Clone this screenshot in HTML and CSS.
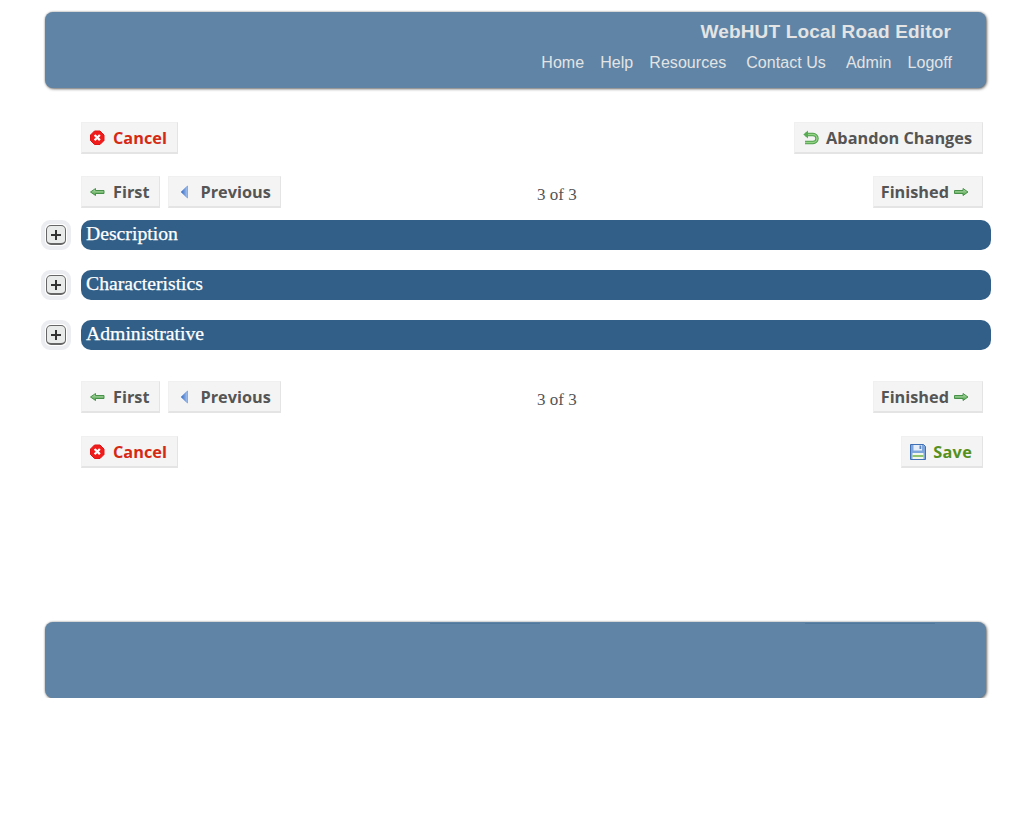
FILE: index.html
```html
<!DOCTYPE html>
<html lang="en">
<head>
<meta charset="utf-8">
<title>WebHUT Local Road Editor</title>
<link rel="stylesheet" href="styles.css">
</head>
<body>
<div class="page">
  <header class="banner">
    <div class="title">WebHUT Local Road Editor</div>
    <nav class="nav">
      <a>Home</a><a>Help</a><a>Resources</a><a class="wide">Contact Us</a><a class="wide">Admin</a><a>Logoff</a>
    </nav>
  </header>

  <main class="form">
    <div class="row row-top">
      <a class="btn cancel"><svg class="ico" viewBox="0 0 16 16"><use href="#i-cancel"/></svg>Cancel</a>
      <a class="btn"><svg class="ico" viewBox="0 0 16 16"><use href="#i-undo"/></svg>Abandon Changes</a>
    </div>

    <div class="row row-pager">
      <div class="group">
        <a class="btn"><svg class="ico" viewBox="0 0 16 16"><use href="#i-left"/></svg>First</a>
        <a class="btn prev"><svg class="ico" viewBox="0 0 16 16"><use href="#i-prev"/></svg>Previous</a>
      </div>
      <div class="count">3 of 3</div>
      <a class="btn end">Finished<svg class="ico after" viewBox="0 0 16 16"><use href="#i-right"/></svg></a>
    </div>

    <div class="sections">
      <section class="section">
        <span class="toggle"><span class="toggle-box"><svg viewBox="0 0 10 10"><path d="M5 0v10M0 5h10"/></svg></span></span>
        <h2 class="bar">Description</h2>
      </section>
      <section class="section">
        <span class="toggle"><span class="toggle-box"><svg viewBox="0 0 10 10"><path d="M5 0v10M0 5h10"/></svg></span></span>
        <h2 class="bar">Characteristics</h2>
      </section>
      <section class="section">
        <span class="toggle"><span class="toggle-box"><svg viewBox="0 0 10 10"><path d="M5 0v10M0 5h10"/></svg></span></span>
        <h2 class="bar">Administrative</h2>
      </section>
    </div>

    <div class="row row-pager row-pager-low">
      <div class="group">
        <a class="btn"><svg class="ico" viewBox="0 0 16 16"><use href="#i-left"/></svg>First</a>
        <a class="btn prev"><svg class="ico" viewBox="0 0 16 16"><use href="#i-prev"/></svg>Previous</a>
      </div>
      <div class="count">3 of 3</div>
      <a class="btn end">Finished<svg class="ico after" viewBox="0 0 16 16"><use href="#i-right"/></svg></a>
    </div>

    <div class="row row-bottom">
      <a class="btn cancel"><svg class="ico" viewBox="0 0 16 16"><use href="#i-cancel"/></svg>Cancel</a>
      <a class="btn save"><svg class="ico" viewBox="0 0 16 16"><use href="#i-save"/></svg>Save</a>
    </div>
  </main>

  <footer class="banner footer"><span class="mark mark-a"></span><span class="mark mark-b"></span></footer>
</div>

<svg class="defs" width="0" height="0" aria-hidden="true">
  <defs>
    <linearGradient id="g-arrow" x1="0" y1="0" x2="0" y2="1">
      <stop offset="0" stop-color="#b8e0ae"/><stop offset="1" stop-color="#4f9f4d"/>
    </linearGradient>
    <linearGradient id="g-blue" x1="0" y1="0" x2="1" y2="0">
      <stop offset="0" stop-color="#2f66c4"/><stop offset="1" stop-color="#a9c6ee"/>
    </linearGradient>
    <symbol id="i-cancel" viewBox="0 0 16 16">
      <path d="M4.500 1h5.500l4 4v5.500l-4 4H4.500l-4-4V5z" fill="#f01c1c" stroke="#e01616"/>
      <path d="M5.400 5.700l3.700 3.700M9.100 5.700L5.400 9.400" stroke="#fff" stroke-width="2.200" stroke-linecap="square"/>
    </symbol>
    <symbol id="i-undo" viewBox="0 0 16 16">
      <path d="M2 4.500h8a4 4 0 0 1 0 8H2" fill="none" stroke="#4f9f4d" stroke-width="3.400"/>
      <path d="M2 4.500h8a4 4 0 0 1 0 8H2" fill="none" stroke="#93d486" stroke-width="1.500"/>
      <path d="M0.300 4.500L5 0.500v8z" fill="#5aab55"/>
    </symbol>
    <symbol id="i-left" viewBox="0 0 16 16">
      <path d="M0.500 8l5-3.500v2h8.500v3H5.500v2z" fill="url(#g-arrow)" stroke="#3a8a3c" stroke-width="0.900"/>
    </symbol>
    <symbol id="i-right" viewBox="0 0 16 16">
      <path d="M15 8l-5-3.500v2H1.500v3H10v2z" fill="url(#g-arrow)" stroke="#3a8a3c" stroke-width="0.900"/>
    </symbol>
    <symbol id="i-prev" viewBox="0 0 16 16">
      <path d="M10.500 2v12L4 8z" fill="url(#g-blue)" stroke="#5b8ad6" stroke-width="0.600"/>
    </symbol>
    <symbol id="i-save" viewBox="0 0 16 16">
      <path d="M0.500 0.500h13l2 2v13H0.500z" fill="#7ea6dc" stroke="#3f6fb5"/>
      <rect x="3.500" y="1" width="8.500" height="5.500" fill="#e6eefa"/>
      <rect x="9.500" y="1.500" width="1.800" height="3.500" fill="#5a86c6"/>
      <rect x="2.500" y="9" width="11" height="6" fill="#f2f6ea"/>
      <rect x="2.500" y="11" width="11" height="2" fill="#8fc46e"/>
    </symbol>
  </defs>
</svg>
</body>
</html>
```
FILE: styles.css
```css
html, body {
  margin: 0;
  padding: 0;
  background: #fff;
}

.page {
  width: 941px;
  margin-left: 45px;
  padding-top: 12px;
}

.banner {
  box-sizing: border-box;
  height: 76px;
  background: #5f84a6;
  border-radius: 8px;
  box-shadow: 1px 1px 3px rgba(40, 40, 40, 0.65), 0 0 2px rgba(60, 60, 60, 0.4);
  font-family: "Liberation Sans", Arial, sans-serif;
  color: #e4e4e4;
  padding: 9px 35px 0 0;
  position: relative;
}

.title {
  text-align: right;
  font-size: 19px;
  font-weight: 700;
  letter-spacing: 0.160px;
  line-height: 21px;
}

.nav {
  display: flex;
  justify-content: flex-end;
  gap: 16px;
  margin-top: 11px;
  margin-right: -1px;
  font-size: 16px;
  letter-spacing: 0.050px;
  line-height: 20px;
}

.nav .wide {
  margin-left: 4px;
}

.form {
  margin-left: 36px;
  width: 902px;
  font-family: "Open Sans", "DejaVu Sans", sans-serif;
}

.row {
  display: flex;
  justify-content: space-between;
  align-items: flex-start;
}

.row-top {
  margin-top: 34px;
}

.row-pager {
  margin-top: 22px;
}

.row-pager-low {
  margin-top: 31px;
}

.row-bottom {
  margin-top: 23px;
}

.group {
  display: flex;
  gap: 8px;
  flex: 0 0 456px;
}

.count {
  flex: 1;
  font-family: "Liberation Serif", "Times New Roman", serif;
  font-size: 17px;
  line-height: 20px;
  color: #555;
  padding-top: 9px;
}

.btn {
  box-sizing: border-box;
  display: inline-flex;
  align-items: center;
  height: 32px;
  padding: 0 10px 0 8px;
  background: #f4f4f4;
  border: 1px solid #f0f0f0;
  border-right-color: #e4e4e4;
  border-bottom: 2px solid #e4e4e4;
  font-size: 16.300px;
  font-weight: 700;
  color: #555;
  white-space: nowrap;
}

.btn.end {
  padding: 0 13px 0 7px;
}

.btn.prev {
  padding-right: 9px;
}

.cancel {
  color: #d42a14;
}

.save {
  color: #56901c;
  letter-spacing: 0.250px;
}

.ico {
  width: 16px;
  height: 16px;
  margin-right: 7px;
  flex: none;
}

.ico.after {
  margin: 0 0 0 4px;
}

.sections {
  margin-top: 12px;
  margin-left: -40px;
  width: 950px;
  display: flex;
  flex-direction: column;
  gap: 20px;
}

.section {
  display: flex;
  align-items: center;
  gap: 10px;
  height: 30px;
}

.toggle {
  box-sizing: border-box;
  width: 30px;
  height: 30px;
  border: 4px solid #ecedf1;
  border-radius: 9px;
  background: #fff;
  display: flex;
  align-items: center;
  justify-content: center;
  flex: none;
}

.toggle-box {
  box-sizing: border-box;
  width: 20px;
  height: 20px;
  border: 1px solid #666;
  border-bottom-width: 2px;
  border-radius: 5px;
  background: #e9ebea;
  display: flex;
  align-items: center;
  justify-content: center;
}

.toggle-box svg {
  width: 10px;
  height: 10px;
  fill: none;
  stroke: #333;
  stroke-width: 2;
}

.bar {
  flex: 1;
  margin: 0;
  height: 30px;
  box-sizing: border-box;
  padding-left: 5px;
  background: #315f88;
  border-radius: 10px;
  font-family: "Liberation Serif", "Times New Roman", serif;
  font-size: 19.700px;
  font-weight: 400;
  -webkit-text-stroke: 0.250px #fff;
  line-height: 27px;
  color: #fff;
}

.footer {
  margin-top: 154px;
}

.mark {
  position: absolute;
  top: 1px;
  height: 1px;
  background: #4f789c;
}

.mark-a {
  left: 385px;
  width: 110px;
}

.mark-b {
  left: 760px;
  width: 130px;
}

.defs {
  position: absolute;
}
```
